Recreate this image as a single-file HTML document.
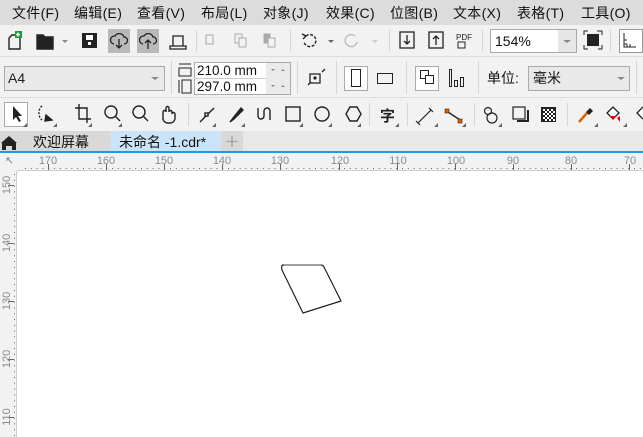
<!DOCTYPE html>
<html><head><meta charset="utf-8"><style>
html,body{margin:0;padding:0;width:643px;height:437px;overflow:hidden;background:#fff}
svg{display:block}
text{font-family:"Liberation Sans","Noto Sans CJK SC",sans-serif}
</style></head><body>
<svg width="643" height="437" viewBox="0 0 643 437" xmlns="http://www.w3.org/2000/svg">
<rect x="0" y="0" width="643" height="25" fill="#dcdcdc"/>
<g font-size="14" fill="#111" letter-spacing="0.3">
<text x="12" y="18">文件(F)</text><text x="74" y="18">编辑(E)</text><text x="137" y="18">查看(V)</text>
<text x="201" y="18">布局(L)</text><text x="263" y="18">对象(J)</text><text x="326" y="18">效果(C)</text>
<text x="390" y="18">位图(B)</text><text x="453" y="18">文本(X)</text><text x="517" y="18">表格(T)</text>
<text x="581" y="18">工具(O)</text></g>
<rect x="0" y="25" width="643" height="106" fill="#f2f2f2"/>
<line x1="0" y1="56.5" x2="643" y2="56.5" stroke="#dcdcdc"/>
<line x1="0" y1="97.5" x2="643" y2="97.5" stroke="#dcdcdc"/>
<g stroke="#222" fill="none" stroke-width="1.4">
<path d="M9 38 L12 35 L20 35 L20 49 L9 49 Z"/>
<rect x="15" y="31" width="7" height="7" fill="#1a9c3a" stroke="none"/>
<path d="M18 32.5v4M16 34.5h4" stroke="#fff"/>
<path d="M37 35 h6 l2 2 h8 v12 h-16z" fill="#222"/>
<path d="M62 40 l3 3 l3 -3z" fill="#888" stroke="none"/>
<rect x="82" y="33" width="15" height="15" fill="#222" stroke="none"/>
<rect x="86" y="35" width="7" height="5" fill="#fff" stroke="none"/><rect x="88" y="42" width="3" height="3" fill="#fff" stroke="none"/>
</g>
<rect x="108" y="29" width="22" height="24" fill="#b9b9b9"/><rect x="137" y="29" width="22" height="24" fill="#b9b9b9"/>
<g stroke="#222" fill="none" stroke-width="1.3">
<path d="M114 44 a4 4 0 0 1 1-8 a5 5 0 0 1 9 1 a3.5 3.5 0 0 1 0 7"/><path d="M119 39v9M116 45l3 3l3-3"/>
<path d="M143 44 a4 4 0 0 1 1-8 a5 5 0 0 1 9 1 a3.5 3.5 0 0 1 0 7"/><path d="M148 49v-9M145 43l3-3l3 3"/>
<path d="M170 46 h16 v3 h-16z M173 46 v-10 h10 v10"/>
</g>
<line x1="196.5" y1="30" x2="196.5" y2="52" stroke="#d6d6d6"/>
<g stroke="#aaa" fill="none"><rect x="206" y="35" width="7" height="9"/><rect x="235" y="34" width="7" height="9"/><rect x="239" y="38" width="7" height="9" fill="#f2f2f2"/><rect x="264" y="34" width="6" height="9" fill="#aaa"/><rect x="268" y="38" width="7" height="9" fill="#f2f2f2"/></g>
<line x1="290.5" y1="30" x2="290.5" y2="52" stroke="#d6d6d6"/>
<g fill="none" stroke-width="1.4"><path d="M306 36 a6 6 0 1 1 -2 6" stroke="#222" stroke-dasharray="3 1.5"/><path d="M302 34 l4 2 l-3 3" stroke="#222"/>
<path d="M328 40 l3 3 l3 -3z" fill="#666" stroke="none"/>
<path d="M355 36 a6 6 0 1 0 2 6" stroke="#bbb"/><path d="M372 40 l3 3 l3 -3z" fill="#ccc" stroke="none"/></g>
<line x1="389.5" y1="30" x2="389.5" y2="52" stroke="#d6d6d6"/>
<g stroke="#222" fill="none" stroke-width="1.3"><rect x="400" y="32" width="14" height="16"/><path d="M407 35v9M404 41l3 3l3-3"/>
<rect x="429" y="32" width="14" height="16"/><path d="M436 45v-9M433 39l3-3l3 3"/></g>
<text x="456" y="40" font-size="8" fill="#222">PDF</text><rect x="458" y="42" width="7" height="6" fill="none" stroke="#222"/>
<line x1="482.5" y1="30" x2="482.5" y2="52" stroke="#d6d6d6"/>
<rect x="490.5" y="29.5" width="86" height="23" fill="#fff" stroke="#aaa"/><rect x="558" y="30" width="18" height="22" fill="#e6e6e6"/>
<path d="M563 40 l4 3 l4 -3z" fill="#888"/>
<text x="495" y="46" font-size="14" fill="#111">154%</text>
<rect x="587" y="34" width="12" height="12" fill="#222"/><path d="M584 35v-4h4M597 31h5v4M602 45v4h-4M588 49h-4v-4" stroke="#222" fill="none"/>
<line x1="610.5" y1="30" x2="610.5" y2="52" stroke="#d6d6d6"/>
<rect x="619.5" y="29.5" width="23" height="23" fill="#fff" stroke="#999"/><path d="M624 33v14h12M627 47v-3M630 47v-3M624 44h3M624 40h3" stroke="#222" fill="none"/>
<rect x="4.5" y="66.5" width="160" height="24" fill="#e9e9e9" stroke="#aaa"/><text x="8" y="83" font-size="14" fill="#222">A4</text><path d="M151 77 l4 3 l4 -3z" fill="#888"/>
<line x1="171.5" y1="61" x2="171.5" y2="94" stroke="#d6d6d6"/>
<g stroke="#222" fill="none"><path d="M179 64h12M179 68h12v8h-12z"/><path d="M179 80v13M182 80h9v13h-9z"/></g>
<rect x="194.5" y="62.5" width="96" height="32" fill="#fff" stroke="#aaa"/><line x1="194" y1="78.5" x2="290" y2="78.5" stroke="#ccc"/>
<rect x="266" y="63" width="24" height="31" fill="#eaeaea"/>
<path d="M271 69l2 2l2-2zM281 71l2-2l2 2zM271 85l2 2l2-2zM281 87l2-2l2 2z" fill="#888"/>
<text x="197" y="75" font-size="13.5" fill="#111">210.0 mm</text><text x="197" y="91" font-size="13.5" fill="#111">297.0 mm</text>
<line x1="297.5" y1="61" x2="297.5" y2="94" stroke="#d6d6d6"/>
<path d="M310 74 h10 v9 h-10z M308 85 l3-3 M322 72 l3-3" stroke="#222" fill="none" stroke-width="1.3"/><circle cx="315" cy="78" r="1.6" fill="#222"/>
<line x1="336.5" y1="61" x2="336.5" y2="94" stroke="#d6d6d6"/>
<rect x="344.5" y="66.5" width="23" height="24" fill="#fff" stroke="#aaa"/><rect x="351.5" y="69.5" width="9" height="17" fill="none" stroke="#222"/>
<rect x="377.5" y="73.5" width="15" height="10" fill="none" stroke="#222"/>
<line x1="406.5" y1="61" x2="406.5" y2="94" stroke="#d6d6d6"/>
<rect x="415.5" y="66.5" width="23" height="24" fill="#fff" stroke="#aaa"/><rect x="420.5" y="70.5" width="8" height="8" fill="none" stroke="#222"/><rect x="425.5" y="75.5" width="8" height="8" fill="#fff" stroke="#222"/>
<path d="M449.5 69.5v17h2v-17zM454.5 80.5h3v6h-3zM460.5 77.5h3v9h-3z" fill="none" stroke="#222"/>
<line x1="478.5" y1="61" x2="478.5" y2="94" stroke="#d6d6d6"/>
<text x="487" y="83" font-size="14" fill="#111">单位:</text>
<rect x="528.5" y="66.5" width="101" height="24" fill="#e9e9e9" stroke="#aaa"/><text x="533" y="83" font-size="14" fill="#111">毫米</text><path d="M617 77 l4 3 l4 -3z" fill="#888"/>
<line x1="636.5" y1="61" x2="636.5" y2="94" stroke="#d6d6d6"/>
<rect x="4.5" y="102.5" width="23" height="24" fill="#fff" stroke="#aaa"/>
<path d="M13 106 v14 l3-3 l3 5 l2-1 l-3-5 h4z" fill="#222"/>
<g fill="#666"><path d="M27 127h-4l4-4z M57 127h-4l4-4z M92 127h-4l4-4z M122 127h-4l4-4z M216 127h-4l4-4z M245 127h-4l4-4z M303 127h-4l4-4z M332 127h-4l4-4z M361 127h-4l4-4z M399 127h-4l4-4z M438 127h-4l4-4z M466 127h-4l4-4z M502 127h-4l4-4z M598 127h-4l4-4z M627 127h-4l4-4z"/></g>
<g stroke="#222" fill="none" stroke-width="1.4">
<path d="M42 106 a6 8 0 0 0 0 14" stroke-dasharray="2 1.5"/><path d="M46 115 l6 5 l-7 1z" fill="#222"/>
<path d="M79 104v15h12M75 108h12v15"/>
<circle cx="111" cy="112" r="6"/><path d="M115 116 l5 5"/>
<circle cx="139" cy="112" r="6"/><path d="M143 116 l5 5"/>
<path d="M163 120 v-8 a1.5 1.5 0 0 1 3 0 v-4 a1.5 1.5 0 0 1 3 0 v4 a1.5 1.5 0 0 1 3 0 v2 a1.5 1.5 0 0 1 3 0 v5 a5 5 0 0 1 -5 4 h-2 a5 5 0 0 1 -5 -4z"/>
</g>
<line x1="188.5" y1="103" x2="188.5" y2="126" stroke="#d6d6d6"/>
<g stroke="#222" fill="none" stroke-width="1.4">
<path d="M200 122 l14 -14"/><rect x="205" y="113" width="3" height="3" fill="#fff"/>
<path d="M230 122 l3 -4 l8 -10 l2 2 l-9 9z" fill="#222"/>
<path d="M258 108 v8 a3 3 0 0 0 6 0 v-5 a3 3 0 0 1 6 0 v9"/>
<rect x="286" y="107" width="14" height="14"/>
<circle cx="322" cy="114" r="7"/>
<path d="M346 114 l4-7 h7 l4 7 l-4 7 h-7z"/>
</g>
<line x1="369.5" y1="103" x2="369.5" y2="126" stroke="#d6d6d6"/>
<text x="380" y="121" font-size="15" font-weight="bold" fill="#222">字</text>
<line x1="407.5" y1="103" x2="407.5" y2="126" stroke="#d6d6d6"/>
<path d="M418 123 l13 -13 M416 121 l4 4 M429 108 l4 4" stroke="#222" fill="none" stroke-width="1.2"/>
<path d="M448 112 l12 8" stroke="#222" stroke-width="1.4"/><rect x="445" y="109" width="4" height="4" fill="#e06000" stroke="#222" stroke-width=".6"/><rect x="458" y="119" width="4" height="4" fill="#e06000" stroke="#222" stroke-width=".6"/>
<line x1="474.5" y1="103" x2="474.5" y2="126" stroke="#d6d6d6"/>
<g stroke="#222" fill="none" stroke-width="1.2"><circle cx="488" cy="111" r="3.5"/><circle cx="492" cy="118" r="5"/>
<rect x="513" y="107" width="12" height="12"/></g><path d="M517 121 h11 v-11" stroke="#222" stroke-width="2" fill="none"/>
<rect x="541" y="107" width="15" height="15" fill="#222"/>
<g fill="#fff"><rect x="543" y="109" width="2" height="2"/><rect x="547" y="109" width="2" height="2"/><rect x="551" y="109" width="2" height="2"/><rect x="545" y="111" width="2" height="2"/><rect x="549" y="111" width="2" height="2"/><rect x="553" y="111" width="2" height="2"/><rect x="543" y="113" width="2" height="2"/><rect x="547" y="113" width="2" height="2"/><rect x="551" y="113" width="2" height="2"/><rect x="545" y="115" width="2" height="2"/><rect x="549" y="115" width="2" height="2"/><rect x="553" y="115" width="2" height="2"/><rect x="543" y="117" width="2" height="2"/><rect x="547" y="117" width="2" height="2"/><rect x="551" y="117" width="2" height="2"/><rect x="545" y="119" width="2" height="2"/><rect x="549" y="119" width="2" height="2"/><rect x="553" y="119" width="2" height="2"/></g>
<line x1="567.5" y1="103" x2="567.5" y2="126" stroke="#d6d6d6"/>
<path d="M579 122 l8 -9" stroke="#e06000" stroke-width="2.5"/><path d="M586 112 l4 -4 l3 3 l-4 4z" fill="#222"/>
<path d="M607 113 l6 -6 l6 6 l-6 6z" fill="#fff" stroke="#222" stroke-width="1.3"/><path d="M609 116 l4 3 l4 -3z M617 118 l3 -2 v6z" fill="#e00"/>
<path d="M643 107 l-6 6 l6 6" fill="#fff" stroke="#222" stroke-width="1.3"/>
<rect x="0" y="131" width="643" height="21" fill="#e8e8e8"/>
<rect x="0" y="131" width="111" height="21" fill="#d9d9d9"/>
<path d="M2 150 v-7 h-1 l8 -7 l8 7 h-1 v7 h-4 v-4 h-6 v4z" fill="#222"/>
<text x="33" y="147" font-size="14" fill="#111">欢迎屏幕</text>
<rect x="111" y="131" width="110" height="21" fill="#cce4f7"/>
<text x="119" y="147" font-size="14" fill="#111">未命名 -1.cdr*</text>
<rect x="221" y="131" width="22" height="21" fill="#d9d9d9"/><path d="M232 136v11M226.5 141.5h11" stroke="#aaa" stroke-width="1.6"/>
<rect x="0" y="151" width="643" height="2" fill="#1e9be0"/>
<rect x="0" y="153" width="643" height="284" fill="#f2f2f2"/>
<rect x="17" y="171" width="626" height="266" fill="#fff"/>
<line x1="16.5" y1="171" x2="16.5" y2="437" stroke="#ccc"/><line x1="17" y1="170.5" x2="643" y2="170.5" stroke="#ccc"/>
<path d="M7 158 l5 5 M7 158 h3 M7 158 v3" stroke="#888" fill="none"/>
<g font-size="11" fill="#8a8a8a" text-anchor="middle">
<text x="48" y="164">170</text><text x="106" y="164">160</text><text x="164" y="164">150</text><text x="222" y="164">140</text><text x="280" y="164">130</text><text x="340" y="164">120</text><text x="398" y="164">110</text><text x="456" y="164">100</text><text x="513" y="164">90</text><text x="571" y="164">80</text><text x="630" y="164">70</text>
</g>
<g stroke="#666">
<path d="M48.5 164v6M106.5 164v6M164.5 164v6M222.5 164v6M280.5 164v6M339.5 164v6M397.5 164v6M455.5 164v6M513.5 164v6M571.5 164v6M629.5 164v6"/>
<path d="M14 185.5h-6M14 243.5h-6M14 301.5h-6M14 359.5h-6M14 417.5h-6"/>
</g>
<g stroke="#666" stroke-dasharray="1 4.8">
<line x1="25" y1="168.5" x2="643" y2="168.5"/>
<line x1="14.5" y1="174" x2="14.5" y2="437"/>
</g>
<g font-size="11" fill="#8a8a8a" text-anchor="middle">
<text transform="translate(10 185) rotate(-90)">150</text>
<text transform="translate(10 243) rotate(-90)">140</text>
<text transform="translate(10 301) rotate(-90)">130</text>
<text transform="translate(10 359) rotate(-90)">120</text>
<text transform="translate(10 417) rotate(-90)">110</text>
</g>
<path d="M283 265 H321 Q323 265 324 267 L341 301 L303 313 L282 270 Q281 265 283 265 Z" fill="none" stroke="#222" stroke-width="1.2" stroke-linejoin="round"/>
<line x1="284" y1="265" x2="321" y2="265" stroke="#888" stroke-width="1.3"/>
</svg>
</body></html>
